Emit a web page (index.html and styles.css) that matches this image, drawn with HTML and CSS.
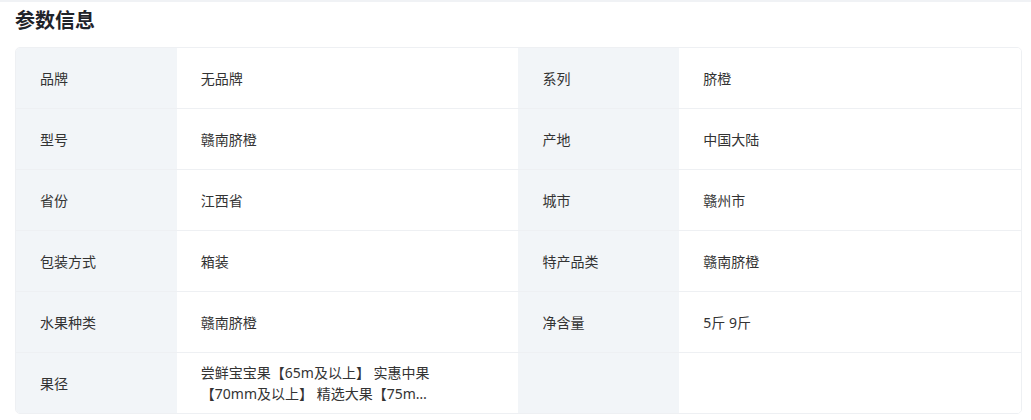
FILE: index.html
```html
<!DOCTYPE html>
<html lang="zh-CN">
<head>
<meta charset="utf-8">
<link rel="stylesheet" href="styles.css">
</head>
<body>
<div class="page">
  <h2 class="title">参数信息</h2>
  <div class="table">
    <div class="row">
      <div class="label">品牌</div><div class="value">无品牌</div>
      <div class="label">系列</div><div class="value">脐橙</div>
    </div>
    <div class="row">
      <div class="label">型号</div><div class="value">赣南脐橙</div>
      <div class="label">产地</div><div class="value">中国大陆</div>
    </div>
    <div class="row">
      <div class="label">省份</div><div class="value">江西省</div>
      <div class="label">城市</div><div class="value">赣州市</div>
    </div>
    <div class="row">
      <div class="label">包装方式</div><div class="value">箱装</div>
      <div class="label">特产品类</div><div class="value">赣南脐橙</div>
    </div>
    <div class="row">
      <div class="label">水果种类</div><div class="value">赣南脐橙</div>
      <div class="label">净含量</div><div class="value">5斤 9斤</div>
    </div>
    <div class="row">
      <div class="label">果径</div><div class="value"><span class="clamp">尝鲜宝宝果【65m及以上】 实惠中果【70mm及以上】 精选大果【75mm及以上】</span></div>
      <div class="label"></div><div class="value"></div>
    </div>
  </div>
</div>
</body>
</html>
```

FILE: styles.css
```css
* { box-sizing: border-box; }
html, body { margin: 0; padding: 0; background: #fff; }
body {
  font-family: "Noto Sans", "Noto Sans CJK SC", sans-serif;
  color: #333;
  border-top: 2px solid #f0f2f5;
}
.page {
  padding: 5px 9px 0 15px;
}
.title {
  margin: 0;
  font-size: 20px;
  line-height: 28px;
  font-weight: 700;
  color: #1f2329;
}
.table {
  margin-top: 12px;
  border: 1px solid #eef0f3;
  border-radius: 5px;
  overflow: hidden;
}
.row {
  display: grid;
  grid-template-columns: 16% 34% 16% 34%;
  height: 61px;
  border-bottom: 1px solid #eef0f3;
}
.row:last-child { border-bottom: none; height: 60px; }
.label, .value {
  display: flex;
  align-items: center;
  padding: 0 24px;
  font-size: 14px;
  line-height: 21px;
}
.label { background: #f2f5f8; color: #333; }
.value { background: #fff; color: #333; }
.clamp {
  display: -webkit-box;
  -webkit-box-orient: vertical;
  -webkit-line-clamp: 2;
  overflow: hidden;
  max-width: 236px;
}
```
